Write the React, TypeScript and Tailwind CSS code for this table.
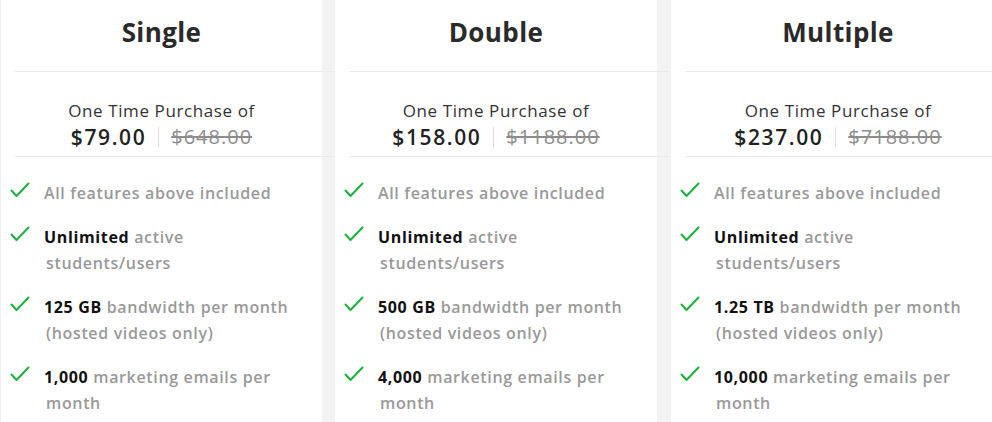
import React from "react";

type Feature = { bold?: string; lines: string[] };
type Plan = { name: string; price: string; old: string; features: Feature[] };

const plans: Plan[] = [
  {
    name: "Single",
    price: "$79.00",
    old: "$648.00",
    features: [
      { lines: ["All features above included"] },
      { bold: "Unlimited", lines: [" active", "students/users"] },
      { bold: "125 GB", lines: [" bandwidth per month", "(hosted videos only)"] },
      { bold: "1,000", lines: [" marketing emails per", "month"] },
    ],
  },
  {
    name: "Double",
    price: "$158.00",
    old: "$1188.00",
    features: [
      { lines: ["All features above included"] },
      { bold: "Unlimited", lines: [" active", "students/users"] },
      { bold: "500 GB", lines: [" bandwidth per month", "(hosted videos only)"] },
      { bold: "4,000", lines: [" marketing emails per", "month"] },
    ],
  },
  {
    name: "Multiple",
    price: "$237.00",
    old: "$7188.00",
    features: [
      { lines: ["All features above included"] },
      { bold: "Unlimited", lines: [" active", "students/users"] },
      { bold: "1.25 TB", lines: [" bandwidth per month", "(hosted videos only)"] },
      { bold: "10,000", lines: [" marketing emails per", "month"] },
    ],
  },
];

function Check() {
  return (
    <svg width="20" height="16" viewBox="0 0 20 16" className="shrink-0 mt-[2px]">
      <path d="M1.5 8.5 L6.5 14 L18.5 1.5" fill="none" stroke="#19b33a" strokeWidth="2" strokeLinecap="round" strokeLinejoin="round" />
    </svg>
  );
}

function Card({ plan, className }: { plan: Plan; className: string }) {
  return (
    <div className={`bg-white flex flex-col shrink-0 ${className}`}>
      <div className="h-[71px] flex items-center justify-center pb-[8px]">
        <h2 className="text-[26px] font-bold text-[#2a2a2a] leading-none tracking-[0.4px]">{plan.name}</h2>
      </div>
      <div className="relative ml-[14px] w-[320px] h-px bg-[#ebebeb] shrink-0" />
      <div className="h-[84px] flex flex-col items-center pt-[26px]">
        <div className="text-[17px] leading-[26px] text-[#333] tracking-[0.6px]">One Time Purchase of</div>
        <div className="flex items-center leading-[26px]">
          <span className="text-[21px] font-semibold text-[#222] tracking-[1.6px]">{plan.price}</span>
          <span className="w-px h-[20px] bg-[#dddddd] mx-[12px]" />
          <span className="text-[20px] text-[#8c8c8c] line-through tracking-[1px]">{plan.old}</span>
        </div>
      </div>
      <div className="relative ml-[14px] w-[320px] h-px bg-[#ebebeb] shrink-0" />
      <ul className="flex flex-col gap-[18px] pt-[23px] pl-[9px]">
        {plan.features.map((f, i) => (
          <li key={i} className="flex items-start">
            <Check />
            <div className="ml-[14px] text-[16px] leading-[26px] font-semibold text-[#999999] whitespace-nowrap tracking-[0.65px]">
              <div>
                {f.bold && <span className="text-[#111111] font-bold">{f.bold}</span>}
                {f.lines[0]}
              </div>
              {f.lines[1] && <div className="pl-[2px]">{f.lines[1]}</div>}
            </div>
          </li>
        ))}
      </ul>
    </div>
  );
}

export default function App() {
  return (
    <div
      className="flex h-[422px] w-[992px] overflow-hidden bg-[#f3f3f4] border-l border-[#efefef]"
      style={{ fontFamily: "'Open Sans', Lato, sans-serif" }}
    >
      <Card plan={plans[0]} className="w-[321px]" />
      <Card plan={plans[1]} className="ml-[13px] w-[322px]" />
      <Card plan={plans[2]} className="ml-[14px] flex-1" />
    </div>
  );
}
